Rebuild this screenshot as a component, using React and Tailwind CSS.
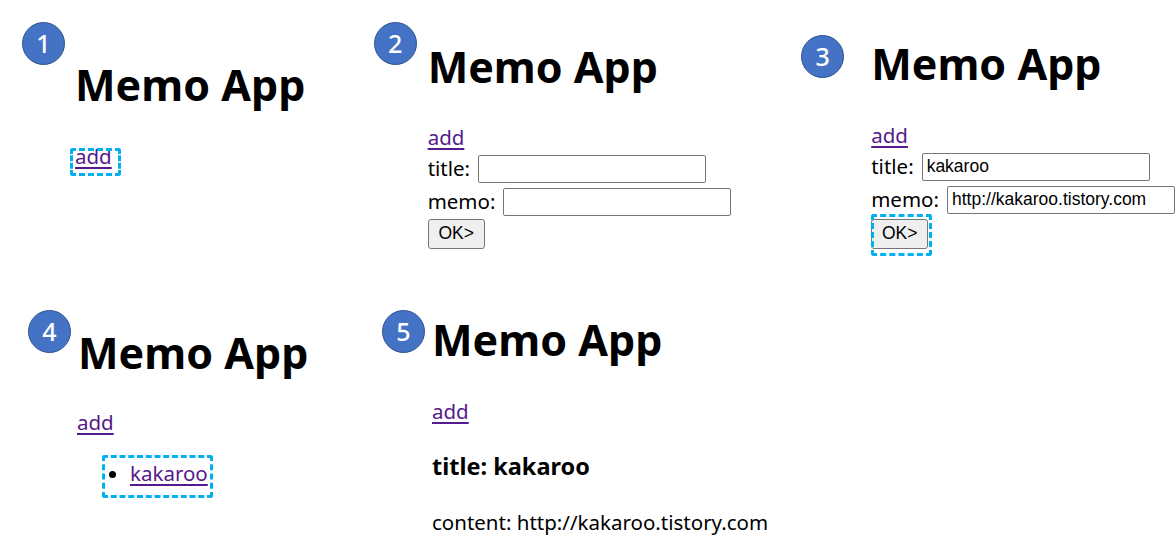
function Badge({ n, className = "" }) {
  return (
    <div className={`flex h-[43px] w-[43px] shrink-0 items-center justify-center rounded-full border border-[#2f528f] bg-[#4472c4] text-[25px] font-medium leading-none text-white ${className}`}>
      {n}
    </div>
  )
}

// dashed "clicked here" marker drawn over an element
function Focus({ className = "" }) {
  return <span className={`pointer-events-none absolute rounded-[3px] border-[3px] border-dashed border-[#00b0f0] ${className}`} />
}

function Heading({ className = "" }) {
  return <h1 className={`text-[43px] font-bold leading-none ${className}`}>Memo App</h1>
}

function AddLink({ className = "", text = "add" }) {
  return <a href="#" className={`text-[#551a8b] underline underline-offset-[3px] ${className}`}>{text}</a>
}

function Field({ label, value = "", className = "" }) {
  return (
    <div className={`flex items-center gap-[8px] ${className}`}>
      <span>{label}</span>
      <input
        readOnly
        value={value}
        className="h-[28px] w-[228px] rounded-[2px] border border-[#767676] bg-white px-[4px] font-['Liberation_Sans',Arial,sans-serif] text-[17.5px] text-black outline-none"
      />
    </div>
  )
}

function OkButton() {
  return (
    <button className="h-[30px] w-[57px] rounded-[3px] border border-[#767676] bg-[#efefef] font-['Liberation_Sans',Arial,sans-serif] text-[17.5px] leading-none text-black">
      OK&gt;
    </button>
  )
}

export default function App() {
  return (
    <div className="h-[552px] w-[1175px] overflow-hidden bg-white font-['Noto_Sans',sans-serif] text-[20.5px] leading-none text-black">
      <div className="flex h-[290px] items-start">
        {/* 1 */}
        <div className="flex w-[374px] items-start pl-[22px] pt-[22px]">
          <Badge n="1" />
          <div className="ml-[10px] flex flex-col items-start">
            <Heading className="mt-[41px]" />
            <span className="relative mt-[40px] inline-block">
              <AddLink />
              <Focus className="-left-[5px] -right-[9px] top-[2px] -bottom-[9px]" />
            </span>
          </div>
        </div>

        {/* 2 */}
        <div className="flex w-[428px] items-start pt-[22px]">
          <Badge n="2" />
          <div className="ml-[11px] flex flex-col items-start">
            <Heading className="mt-[23px]" />
            <AddLink className="mt-[39px]" />
            <Field label="title:" className="mt-[7px]" />
            <Field label="memo:" className="mt-[5px]" />
            <div className="mt-[3px]">
              <OkButton />
            </div>
          </div>
        </div>

        {/* 3 */}
        <div className="flex items-start pt-[35px]">
          <Badge n="3" />
          <div className="ml-[27px] flex flex-col items-start">
            <Heading className="mt-[7px]" />
            <AddLink className="mt-[40px]" />
            <Field label="title:" value="kakaroo" className="mt-[7px]" />
            <Field label="memo:" value="http://kakaroo.tistory.com" className="mt-[5px]" />
            <div className="relative mt-[5px]">
              <OkButton />
              <Focus className="left-0 -right-[4px] -top-[5px] -bottom-[7px]" />
            </div>
          </div>
        </div>
      </div>

      <div className="flex items-start">
        {/* 4 */}
        <div className="flex w-[382px] items-start pl-[28px] pt-[20px]">
          <Badge n="4" />
          <div className="ml-[6px] flex flex-col items-start">
            <Heading className="ml-[1px] mt-[21px]" />
            <AddLink className="mt-[38px]" />
            <ul className="mt-[30px] list-disc pl-[53px]">
              <li className="relative w-fit">
                <AddLink text="kakaroo" />
                <Focus className="-left-[28px] -right-[5px] -top-[8px] -bottom-[15px]" />
              </li>
            </ul>
          </div>
        </div>

        {/* 5 */}
        <div className="flex items-start pt-[20px]">
          <Badge n="5" className="h-[42px] w-[42px]" />
          <div className="ml-[7px] flex flex-col items-start">
            <Heading className="mt-[8px]" />
            <AddLink className="mt-[40px]" />
            <h3 className="mt-[33px] text-[23.5px] font-bold leading-none">title: kakaroo</h3>
            <p className="mt-[34px]">content: http://kakaroo.tistory.com</p>
          </div>
        </div>
      </div>
    </div>
  )
}
